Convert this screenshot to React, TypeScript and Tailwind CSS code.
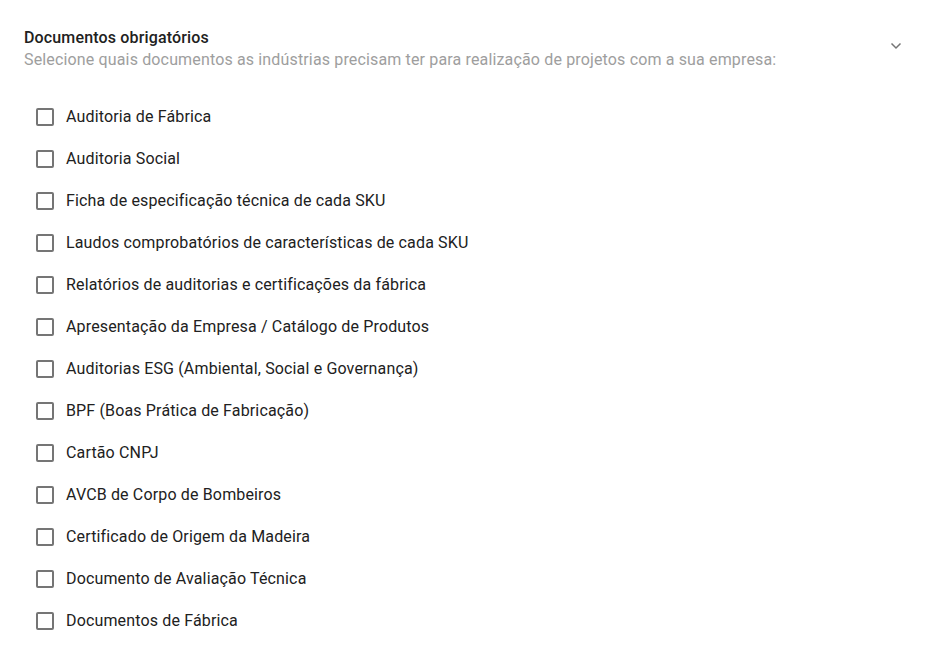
import { useState } from "react"

const documentos = [
  "Auditoria de Fábrica",
  "Auditoria Social",
  "Ficha de especificação técnica de cada SKU",
  "Laudos comprobatórios de características de cada SKU",
  "Relatórios de auditorias e certificações da fábrica",
  "Apresentação da Empresa / Catálogo de Produtos",
  "Auditorias ESG (Ambiental, Social e Governança)",
  "BPF (Boas Prática de Fabricação)",
  "Cartão CNPJ",
  "AVCB de Corpo de Bombeiros",
  "Certificado de Origem da Madeira",
  "Documento de Avaliação Técnica",
  "Documentos de Fábrica",
]

export default function App() {
  const [checked, setChecked] = useState<string[]>([])

  const toggle = (doc: string) => {
    setChecked((prev) => (prev.includes(doc) ? prev.filter((d) => d !== doc) : [...prev, doc]))
  }

  return (
    <div className="min-h-screen bg-white font-['Roboto',sans-serif] px-6 pt-[27px] tracking-[0.15px]">
      <div className="flex items-start justify-between">
        <div>
          <h2 className="text-[16px] leading-[21px] font-medium text-[#212121]">Documentos obrigatórios</h2>
          <p className="text-[16px] leading-[24px] text-[#9e9e9e]">
            Selecione quais documentos as indústrias precisam ter para realização de projetos com a sua empresa:
          </p>
        </div>
        <button className="mr-[13px] mt-[15px] text-[#757575]" aria-label="Recolher">
          <svg width="12" height="8" viewBox="0 0 12 8" fill="none">
            <path d="M1.5 1.5L6 6L10.5 1.5" stroke="currentColor" strokeWidth="1.5" />
          </svg>
        </button>
      </div>

      <ul className="mt-[24px] flex flex-col pl-3">
        {documentos.map((doc) => (
          <li key={doc}>
            <label className="flex h-[42px] cursor-pointer items-center gap-[12px]">
              <input
                type="checkbox"
                className="sr-only"
                checked={checked.includes(doc)}
                onChange={() => toggle(doc)}
              />
              <span
                className={`flex h-[18px] w-[18px] items-center justify-center rounded-[2px] border-2 ${
                  checked.includes(doc) ? "border-[#1976d2] bg-[#1976d2]" : "border-[#757575]"
                }`}
              >
                {checked.includes(doc) && (
                  <svg width="12" height="12" viewBox="0 0 12 12" fill="none">
                    <path d="M2 6.5L5 9L10 3" stroke="white" strokeWidth="2" />
                  </svg>
                )}
              </span>
              <span className="text-[16px] text-[#212121]">{doc}</span>
            </label>
          </li>
        ))}
      </ul>
    </div>
  )
}
